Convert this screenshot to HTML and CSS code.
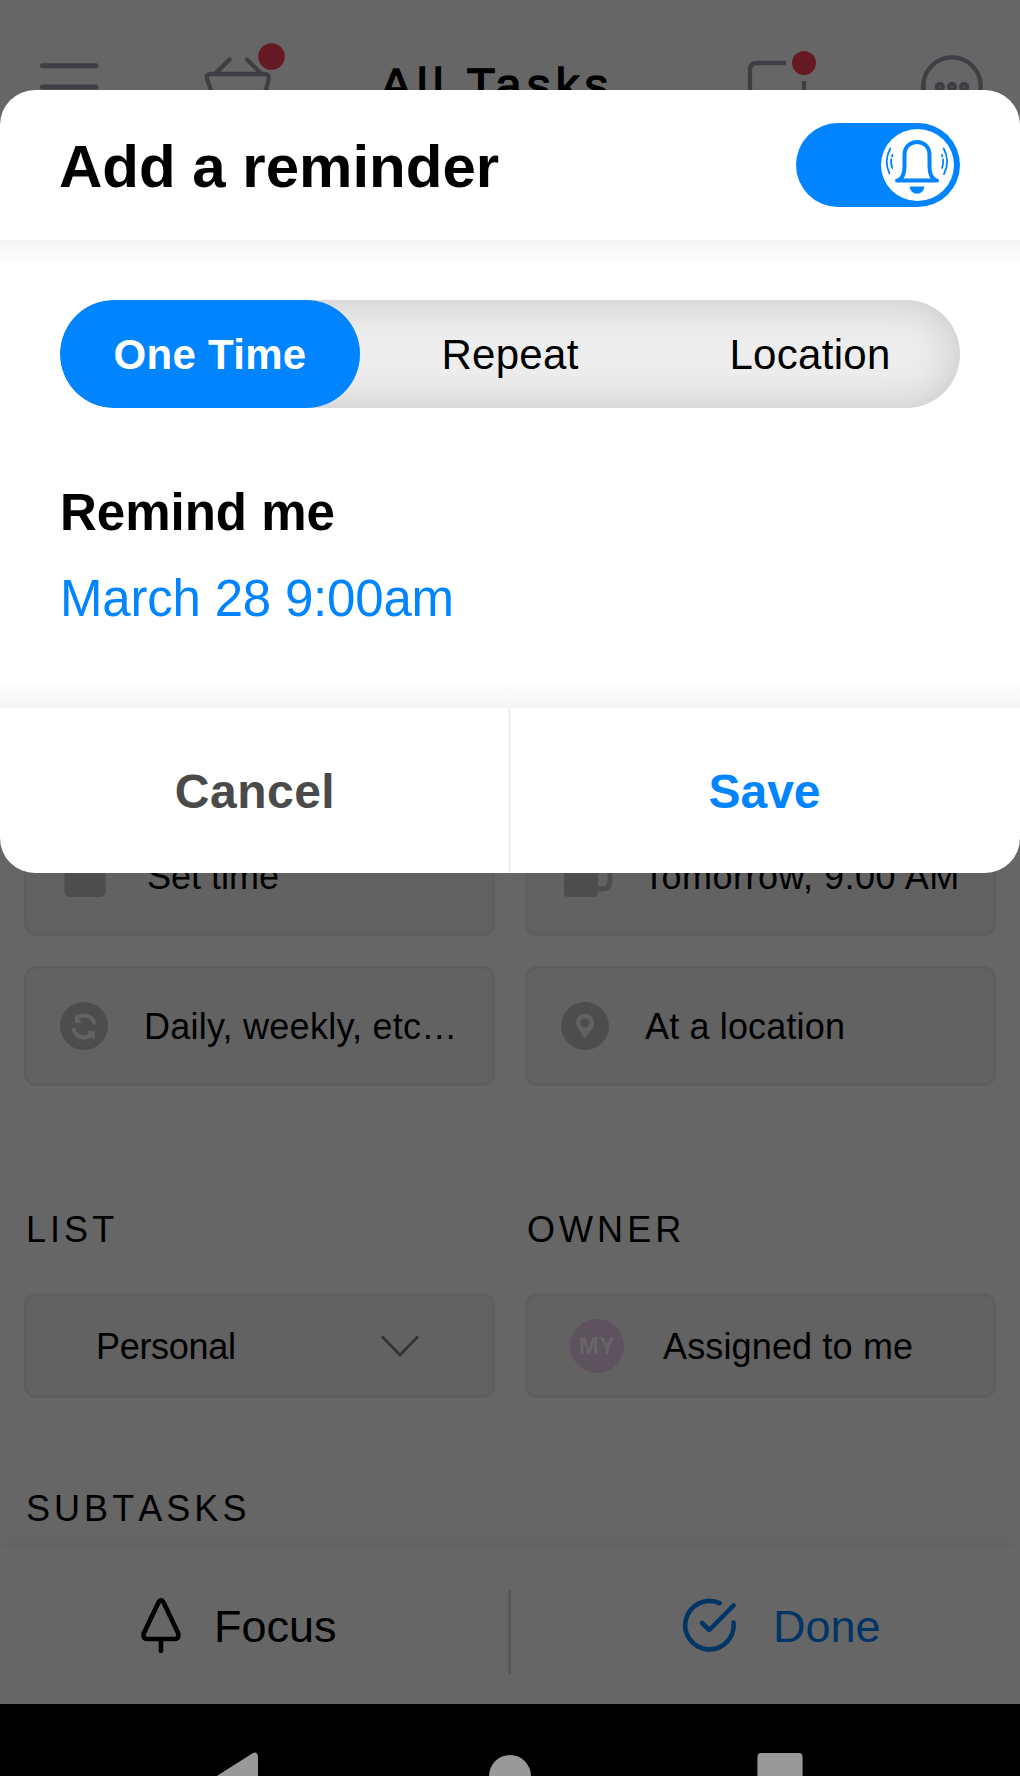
FILE: index.html
```html
<!DOCTYPE html>
<html lang="en">
<head>
<meta charset="utf-8">
<title>Add a reminder</title>
<link rel="stylesheet" href="styles.css">
</head>
<body>
<div class="phone">
  <div class="app">
    <header class="topbar">
      <svg class="icon-menu" width="60" height="60" viewBox="0 0 60 60"><path d="M3.500 13.700H57M3.500 35H57"/></svg>
      <svg class="icon-basket" width="84" height="70" viewBox="0 0 84 70"><path d="M14 32 28.500 17.500M46 17.500 60.500 32M14 60 6.500 38Q4 32 10 32H63Q69 32 67.500 38L62 60Z"/><circle class="badge" cx="70.500" cy="14.500" r="13.300"/></svg>
      <h1 class="topbar-title">All Tasks</h1>
      <svg class="icon-note" width="70" height="70" viewBox="0 0 70 70"><path d="M40 13H11Q4 13 4 20V66H58V31"/><circle class="badge" cx="58" cy="13" r="12"/></svg>
      <svg class="icon-chat" width="64" height="64" viewBox="0 0 64 64"><circle cx="32" cy="31" r="28.700"/><path d="M3 31V38"/><circle cx="19.800" cy="32" r="3"/><circle cx="32" cy="32" r="3"/><circle cx="44.200" cy="32" r="3"/></svg>
    </header>
    <main class="content">
      <div class="grid">
        <div class="chip chip-time"><svg width="42" height="48" viewBox="0 0 42 48"><rect x="0.500" y="4" width="41" height="41" rx="5"/></svg><span>Set time</span></div>
        <div class="chip chip-tomorrow"><svg width="50" height="48" viewBox="0 0 50 48"><path d="M0 4H34V41Q34 45 30 45H4Q0 45 0 41Z"/><path class="mug-handle" d="M34 11H40Q46 11 46 17V27Q46 37 39 37H34"/></svg><span>Tomorrow, 9:00 AM</span></div>
        <div class="chip chip-repeat"><svg width="48" height="48" viewBox="0 0 48 48"><circle cx="24" cy="24" r="24"/><path class="cut-line" d="M16 16.500Q19 13.500 24 13.500C29.500 13.500 34 17 34.500 22.500M32 31.500Q29 35.500 24 35.500C18.500 35.500 14 31.500 13.500 26"/><path class="cut" d="M15 12V21H22ZM27 29H35L34 38Z"/></svg><span>Daily, weekly, etc…</span></div>
        <div class="chip chip-place"><svg width="48" height="48" viewBox="0 0 48 48"><circle cx="24" cy="24" r="24"/><path class="cut" fill-rule="evenodd" d="M24 12C18.500 12 15 16 15 21C15 26 19 29 24 36.500C29 29 33 26 33 21C33 16 29.500 12 24 12ZM24 16.500A4.500 4.500 0 1 1 24 25.500A4.500 4.500 0 1 1 24 16.500Z"/></svg><span>At a location</span></div>
      </div>
      <div class="grid labels"><h2 class="label">LIST</h2><h2 class="label">OWNER</h2></div>
      <div class="grid fields">
        <div class="field field-list"><span>Personal</span><svg class="chevron" width="40" height="24" viewBox="0 0 40 24"><path d="M2 2.500 20 21 38 2.500"/></svg></div>
        <div class="field field-owner"><span class="avatar">MY</span><span>Assigned to me</span></div>
      </div>
      <h2 class="label">SUBTASKS</h2>
    </main>
    <footer class="actions">
      <div class="action action-focus"><svg width="42" height="58" viewBox="0 0 42 58"><path d="M18.200 6Q21 .5 23.800 6L38.300 36.500Q39.500 42 34.500 42H7.500Q2.500 42 3.700 36.500ZM21 42V54"/></svg><span>Focus</span></div>
      <div class="action action-done"><svg width="56" height="56" viewBox="0 0 56 56"><path d="M37.500 6.200A24.200 24.200 0 1 0 51.500 25.500M20 26 27.300 33 51.500 8.500"/></svg><span>Done</span></div>
    </footer>
    <div class="dim"></div>
  </div>
  <nav class="sysnav">
    <svg class="nav-back" width="60" height="72" viewBox="0 0 60 72"><path d="M60 52V4Q59 -1 55 1L14 27Q10 30 14 32L54 56Z"/></svg>
    <svg class="nav-home" width="42" height="72" viewBox="0 0 42 72"><circle cx="21" cy="21" r="21"/></svg>
    <svg class="nav-recent" width="46" height="72" viewBox="0 0 46 72"><rect x="0.400" y="1" width="45.200" height="46" rx="4"/></svg>
  </nav>

  <section class="dialog">
    <header class="dialog-head">
      <h2 class="dialog-title">Add a reminder</h2>
      <div class="toggle"><div class="knob">
        <svg width="72" height="72" viewBox="0 0 72 72">
          <path class="bell" d="M17 51.300C22.500 49.500 23.500 43 23.500 37V26C23.500 8.500 48.500 8.500 48.500 26V37C48.500 43 49.500 49.500 55 51.300M16 51.600H56"/>
          <path class="clapper" d="M28.700 57.500H43.300A7.300 7.300 0 0 1 28.700 57.500Z"/>
          <path class="ring" d="M9.300 19.500Q2.500 32 8.500 44.500M62.700 19.500Q69.500 32 63 45"/>
          <path class="ring ring-inner" d="M11.500 26Q8.500 32 11.300 39M60.800 26Q63.500 32 61 39"/>
        </svg>
      </div></div>
    </header>
    <div class="dialog-body">
      <div class="tabs"><div class="tab active">One Time</div><div class="tab">Repeat</div><div class="tab">Location</div></div>
      <h3 class="remind">Remind me</h3>
      <div class="when">March 28 9:00am</div>
    </div>
    <footer class="dialog-foot"><div class="btn cancel">Cancel</div><div class="btn save">Save</div></footer>
  </section>
</div>
</body>
</html>
```
FILE: styles.css
```css
* { box-sizing: border-box; }
body { margin: 0; font-family: "Liberation Sans", Arial, Helvetica, sans-serif; color: #000; }
h1, h2, h3 { margin: 0; font-weight: 400; }
svg { display: block; flex: none; }
span, h1, h2, h3 { white-space: nowrap; }

.phone { position: relative; width: 1020px; height: 1776px; overflow: hidden; background: #000; display: flex; flex-direction: column; }
.app { position: relative; height: 1704px; background: #fff; display: flex; flex-direction: column; }
.dim { position: absolute; inset: 0; background: rgba(0, 0, 0, .6); }

/* top bar */
.topbar { height: 132px; padding: 42px 35px 0 39px; display: flex; align-items: flex-start; }
.topbar svg { fill: none; stroke: #9b9baa; stroke-width: 4.300px; stroke-linecap: round; overflow: visible; }
.topbar .icon-menu { margin-top: 10px; stroke-width: 5px; }
.icon-basket { margin-left: 101.500px; }
.topbar .badge { fill: #fc4058; stroke: none; }
.topbar-title { margin: 15px 0 0 96px; width: 365.500px; font-size: 46.500px; line-height: 56px; letter-spacing: 5.600px; -webkit-text-stroke: 1.500px #000; }
.topbar .icon-note { margin-top: 8px; stroke-linecap: butt; }
.icon-chat { margin: 13px 0 0 104px; }

/* task details */
.content { flex: 1; padding: 684px 24px 0; overflow: hidden; }
.grid { display: grid; grid-template-columns: 1fr 1fr; gap: 30px; }
.chip, .field { display: flex; align-items: center; background: #f5f5f5; border: 3px solid #ebebeb; border-radius: 12px; font-size: 36px; }
.chip { height: 120px; padding-left: 33px; gap: 36px; }
.chip span { padding-top: 2px; }
.chip svg { fill: #c1c1c1; }
.chip svg .cut { fill: #f5f5f5; }
.chip svg .cut-line { fill: none; stroke: #f5f5f5; stroke-width: 4px; }
.chip svg .mug-handle { fill: none; stroke: #c1c1c1; stroke-width: 5px; }
.chip-time { padding-left: 37px; gap: 41px; }
.chip-tomorrow { padding-left: 36px; gap: 29px; letter-spacing: .5px; }
.chip-repeat { letter-spacing: .25px; }
.chip-place { letter-spacing: .15px; }
.label { font-size: 36px; line-height: 40px; letter-spacing: 4.050px; font-kerning: none; padding-left: 2px; }
.labels { margin-top: 124px; }
.fields { margin-top: 43px; margin-bottom: 91px; }
.field { height: 105px; }
.field span { padding-top: 3px; }
.field-list { padding-left: 69px; letter-spacing: -.3px; }
.chevron { margin: 0 0 0 144px; fill: none; stroke: #808080; stroke-width: 2.800px; }
.field-owner { padding-left: 42px; gap: 39px; letter-spacing: .15px; }
.field .avatar { width: 54px; height: 54px; padding: 0; border-radius: 50%; background: #ebcdee; color: #fff; font-size: 24px; font-weight: 700; line-height: 54px; text-align: center; }

/* bottom actions */
.actions { position: relative; height: 156px; display: flex; background: #fff; box-shadow: 0 0 18px rgba(0, 0, 0, .07); }
.actions::after { content: ""; position: absolute; left: 508px; top: 42px; width: 3px; height: 84px; background: #dcdcdc; }
.action { width: 510px; display: flex; align-items: center; font-size: 45px; }
.action span { padding-top: 2px; }
.action svg { fill: none; stroke: currentColor; stroke-width: 4.600px; stroke-linecap: round; stroke-linejoin: round; }
.action-focus { padding-left: 140px; gap: 32px; }
.action-done { padding-left: 171.500px; gap: 35.500px; color: #0084ff; }
.action-done svg { margin-top: -2px; }

/* system navigation */
.sysnav { height: 72px; padding: 48px 0 0 198px; display: flex; align-items: flex-start; fill: #999; overflow: hidden; }
.nav-home { margin: 3px 0 0 231px; }
.nav-recent { margin-left: 226px; }

/* reminder dialog */
.dialog { position: absolute; left: 0; top: 90px; width: 1020px; height: 783px; display: flex; flex-direction: column; background: #fff; border-radius: 35px; overflow: hidden; }
.dialog-head { height: 150px; padding: 0 60px; display: flex; align-items: center; justify-content: space-between; }
.dialog-title { font-size: 60px; font-weight: 700; line-height: 70px; padding-top: 3px; margin-left: -1px; }
.toggle { width: 164px; height: 84px; padding-right: 6px; border-radius: 42px; background: #0084ff; display: flex; align-items: center; justify-content: flex-end; }
.knob { width: 73px; height: 72px; border-radius: 50%; background: #fff; }
.bell { fill: none; stroke: #0084ff; stroke-width: 4px; stroke-linecap: round; }
.clapper { fill: #0084ff; }
.ring { fill: none; stroke: #0084ff; stroke-width: 1.800px; stroke-linecap: round; }
.ring-inner { stroke-dasharray: 1.500 3 20; }
.dialog-body { height: 468px; padding: 60px 60px 0; background: linear-gradient(#f5f5f5, #fff 28px, #fff 440px, #f4f4f4); }
.tabs { height: 108px; display: flex; border-radius: 54px; background: #ededed; box-shadow: inset 0 0 42px rgba(0, 0, 0, .17); overflow: hidden; }
.tab { width: 300px; height: 108px; border-radius: 54px; font-size: 42px; line-height: 110px; text-align: center; letter-spacing: .3px; }
.tab.active { background: #0084ff; color: #fff; font-weight: 700; }
.remind { margin-top: 75px; font-size: 51px; font-weight: 700; line-height: 60px; }
.when { margin-top: 26px; font-size: 51px; line-height: 60px; letter-spacing: -.2px; color: #0084ff; }
.dialog-foot { height: 165px; display: flex; }
.btn { font-size: 48px; font-weight: 700; line-height: 168px; text-align: center; }
.cancel { width: 511px; padding-left: 2px; color: #4a4a4a; border-right: 3px solid #f1f1f1; letter-spacing: .5px; }
.save { width: 509px; padding-right: 2px; color: #0084ff; }
```
